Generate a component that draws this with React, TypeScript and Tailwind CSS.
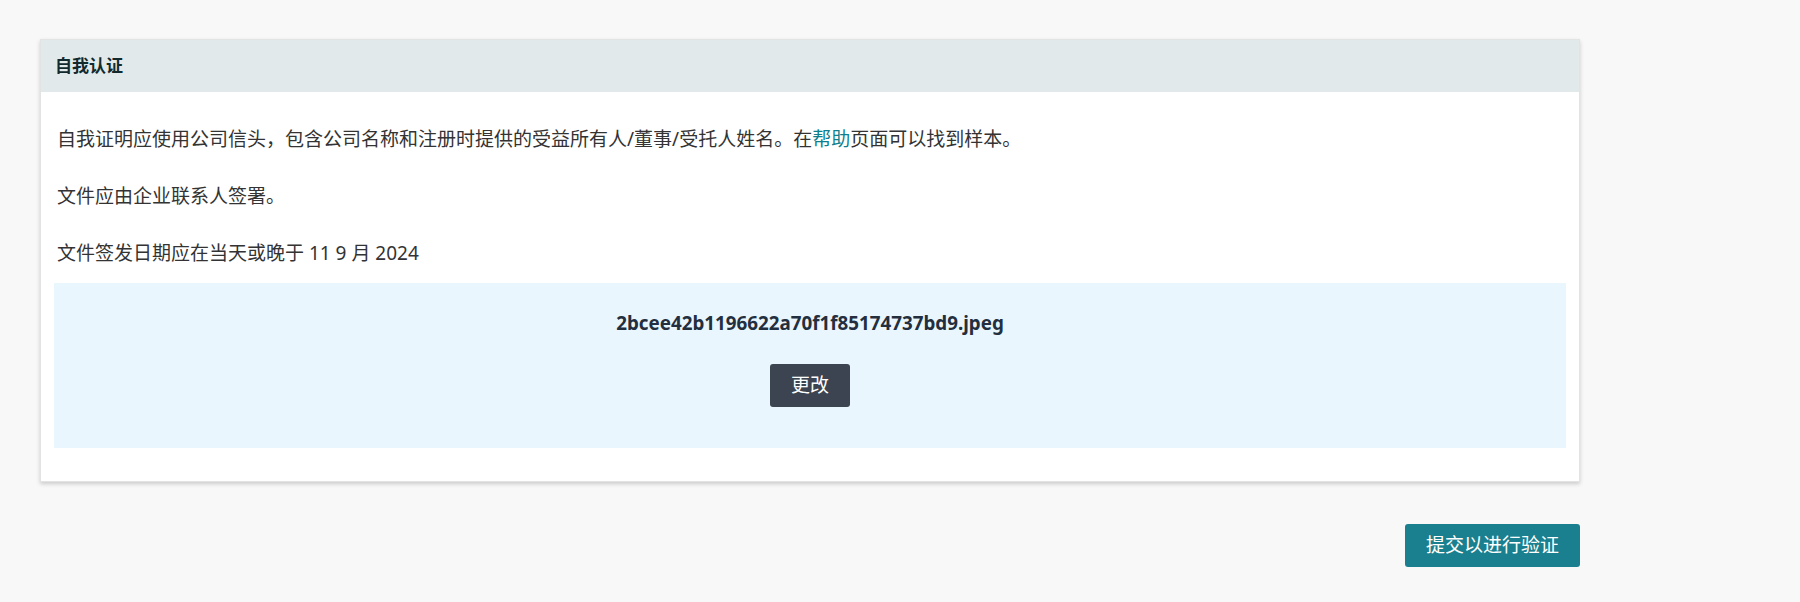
import React from "react";

export default function App() {
  return (
    <div className="min-h-[602px] w-full bg-[#f8f8f8] pt-[39px] pl-[40px] font-['Noto_Sans','Noto_Sans_CJK_SC',sans-serif] text-[#333333]">
      <div className="w-[1540px]">
        <div className="bg-white border border-[#e2e4e4] shadow-[0_2px_4px_rgba(0,0,0,0.18)]">
          <div className="h-[52px] bg-[#e2e9ea] px-[14px] flex items-center">
            <span className="text-[17px] font-bold text-[#12292e]">自我认证</span>
          </div>
          <div className="px-[13px] pt-[33px] pb-[33px]">
            <div className="flex flex-col gap-[29px] px-[3px] text-[19px] leading-[28px]">
              <p>
                自我证明应使用公司信头，包含公司名称和注册时提供的受益所有人/董事/受托人姓名。在
                <span className="text-[#0f7f8d]">帮助</span>
                页面可以找到样本。
              </p>
              <p>文件应由企业联系人签署。</p>
              <p>文件签发日期应在当天或晚于 11 9 月 2024</p>
            </div>
            <div className="mt-[16px] h-[165px] bg-[#eaf6fd] flex flex-col items-center pt-[26px]">
              <div className="text-[18.8px] leading-[28px] font-bold text-[#232f3e]">
                2bcee42b1196622a70f1f85174737bd9.jpeg
              </div>
              <button className="mt-[27px] h-[43px] px-[21px] rounded-[3px] bg-[#3b4450] text-white text-[19px] leading-[43px]">
                更改
              </button>
            </div>
          </div>
        </div>
        <div className="flex justify-end mt-[42px]">
          <button className="h-[43px] px-[21px] rounded-[3px] bg-[#1a7f8e] text-white text-[19px] leading-[43px]">
            提交以进行验证
          </button>
        </div>
      </div>
    </div>
  );
}
